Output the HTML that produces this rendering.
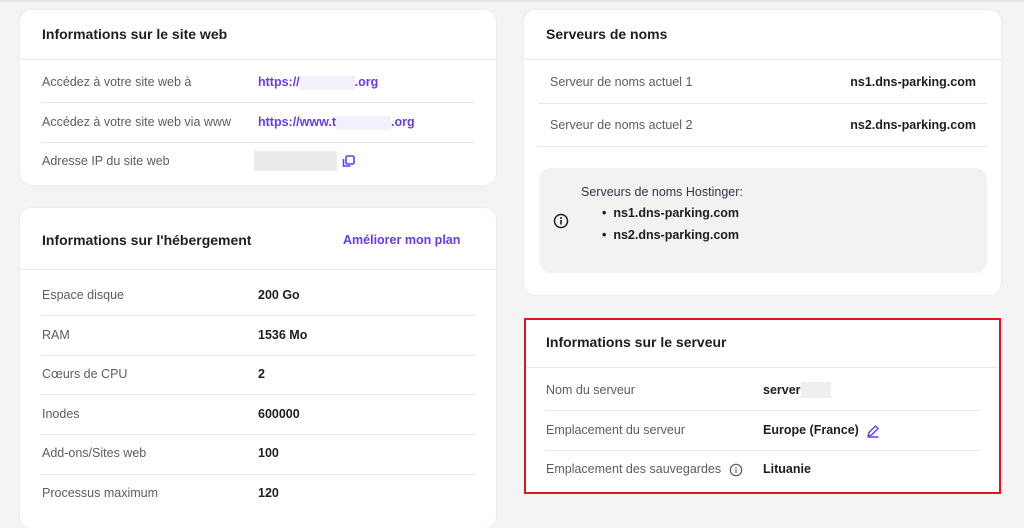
<!DOCTYPE html>
<html><head><meta charset="utf-8"><style>
*{margin:0;padding:0;box-sizing:border-box}
body{width:1024px;height:511px;background:#f4f4f4;font-family:"Liberation Sans",sans-serif;position:relative;overflow:hidden;color:#1d1e20}
.card{position:absolute;background:#fff;border-radius:12px;box-shadow:0 0 2px rgba(0,0,0,.08)}
.a{position:absolute;white-space:nowrap}
.t{font-size:14px;font-weight:bold;color:#1d1e20}
.l{font-size:12.5px;color:#5c5c66}
.v{font-size:12.5px;font-weight:bold;color:#1d1e20}
.p{font-size:12.5px;font-weight:bold;color:#673de6}
.hr{position:absolute;height:1px;background:#e8e8ec}
.blur{position:absolute;background:#ebebee}
</style></head><body>
<div style="position:absolute;left:0;top:0;width:1024px;height:2px;background:#e6e6e6"></div>

<div class="card" style="left:20px;top:10px;width:476px;height:175px"></div>
<div class="a t" style="left:42px;top:26px">Informations sur le site web</div>
<div class="hr" style="left:20px;top:59px;width:476px"></div>
<div class="a l" style="left:42px;top:75px">Accédez à votre site web à</div>
<div class="a p" style="left:258px;top:75px">https://<span style="display:inline-block;width:55px;height:14px;background:#f3f0fc;vertical-align:middle"></span>.org</div>
<div class="hr" style="left:41px;top:102px;width:434px"></div>
<div class="a l" style="left:42px;top:115px">Accédez à votre site web via www</div>
<div class="a p" style="left:258px;top:115px">https://www.t<span style="display:inline-block;width:55px;height:14px;background:#f3f0fc;vertical-align:middle"></span>.org</div>
<div class="hr" style="left:41px;top:142px;width:434px"></div>
<div class="a l" style="left:42px;top:154px">Adresse IP du site web</div>
<div class="blur" style="left:254px;top:151px;width:83px;height:20px"></div>
<svg class="a" style="left:342px;top:155px" width="13" height="13" viewBox="0 0 13 13"><rect x="4" y="1" width="8" height="8" rx="1.5" fill="none" stroke="#673de6" stroke-width="1.6"/><path d="M1.5 4v7h7" fill="none" stroke="#673de6" stroke-width="1.6"/></svg>

<div class="card" style="left:20px;top:208px;width:476px;height:320px"></div>
<div class="a t" style="left:42px;top:232px">Informations sur l'hébergement</div>
<div class="a p" style="left:343px;top:233px;font-size:12.5px">Améliorer mon plan</div>
<div class="hr" style="left:20px;top:269px;width:476px"></div>
<div class="a l" style="left:42px;top:288px">Espace disque</div><div class="a v" style="left:258px;top:288px">200 Go</div>
<div class="hr" style="left:41px;top:315px;width:434px"></div>
<div class="a l" style="left:42px;top:328px">RAM</div><div class="a v" style="left:258px;top:328px">1536 Mo</div>
<div class="hr" style="left:41px;top:355px;width:434px"></div>
<div class="a l" style="left:42px;top:367px">Cœurs de CPU</div><div class="a v" style="left:258px;top:367px">2</div>
<div class="hr" style="left:41px;top:394px;width:434px"></div>
<div class="a l" style="left:42px;top:407px">Inodes</div><div class="a v" style="left:258px;top:407px">600000</div>
<div class="hr" style="left:41px;top:434px;width:434px"></div>
<div class="a l" style="left:42px;top:446px">Add-ons/Sites web</div><div class="a v" style="left:258px;top:446px">100</div>
<div class="hr" style="left:41px;top:474px;width:434px"></div>
<div class="a l" style="left:42px;top:486px">Processus maximum</div><div class="a v" style="left:258px;top:486px">120</div>

<div class="card" style="left:524px;top:10px;width:477px;height:285px"></div>
<div class="a t" style="left:546px;top:26px">Serveurs de noms</div>
<div class="hr" style="left:524px;top:59px;width:477px"></div>
<div class="a l" style="left:550px;top:75px">Serveur de noms actuel 1</div>
<div class="a v" style="right:48px;top:75px">ns1.dns-parking.com</div>
<div class="hr" style="left:538px;top:103px;width:449px"></div>
<div class="a l" style="left:550px;top:118px">Serveur de noms actuel 2</div>
<div class="a v" style="right:48px;top:118px">ns2.dns-parking.com</div>
<div class="hr" style="left:538px;top:146px;width:449px"></div>
<div style="position:absolute;left:539px;top:168px;width:448px;height:105px;background:#f2f2f2;border-radius:12px"></div>
<svg class="a" style="left:553px;top:213px" width="16" height="16" viewBox="0 0 16 16"><circle cx="8" cy="8" r="6.5" fill="none" stroke="#1d1e20" stroke-width="1.5"/><rect x="7.2" y="7" width="1.6" height="4.5" fill="#1d1e20"/><circle cx="8" cy="5" r="1" fill="#1d1e20"/></svg>
<div class="a l" style="left:581px;top:185px;color:#36344d">Serveurs de noms Hostinger:</div>
<div class="a v" style="left:602px;top:206px">•&nbsp;&nbsp;ns1.dns-parking.com</div>
<div class="a v" style="left:602px;top:228px">•&nbsp;&nbsp;ns2.dns-parking.com</div>

<div style="position:absolute;left:524px;top:318px;width:477px;height:176px;background:#fff;border:2px solid #e5131c"></div>
<div class="a t" style="left:546px;top:334px">Informations sur le serveur</div>
<div class="hr" style="left:526px;top:367px;width:473px"></div>
<div class="a l" style="left:546px;top:383px">Nom du serveur</div>
<div class="a v" style="left:763px;top:383px">server</div>
<div class="blur" style="left:801px;top:382px;width:30px;height:16px;background:#efeff1"></div>
<div class="hr" style="left:546px;top:410px;width:434px"></div>
<div class="a l" style="left:546px;top:423px">Emplacement du serveur</div>
<div class="a v" style="left:763px;top:423px">Europe (France)</div>
<svg class="a" style="left:866px;top:424px" width="14" height="14" viewBox="0 0 14 14"><path d="M2 12l1-3.5L9.5 2l2.5 2.5L5.5 11z M1.5 13h11" fill="none" stroke="#673de6" stroke-width="1.4" stroke-linejoin="round"/></svg>
<div class="hr" style="left:546px;top:450px;width:434px"></div>
<div class="a l" style="left:546px;top:462px">Emplacement des sauvegardes</div>
<svg class="a" style="left:729px;top:463px" width="14" height="14" viewBox="0 0 16 16"><circle cx="8" cy="8" r="6.5" fill="none" stroke="#5c5c66" stroke-width="1.4"/><rect x="7.3" y="7" width="1.4" height="4.5" fill="#5c5c66"/><circle cx="8" cy="5" r="0.9" fill="#5c5c66"/></svg>
<div class="a v" style="left:763px;top:462px">Lituanie</div>
</body></html>
